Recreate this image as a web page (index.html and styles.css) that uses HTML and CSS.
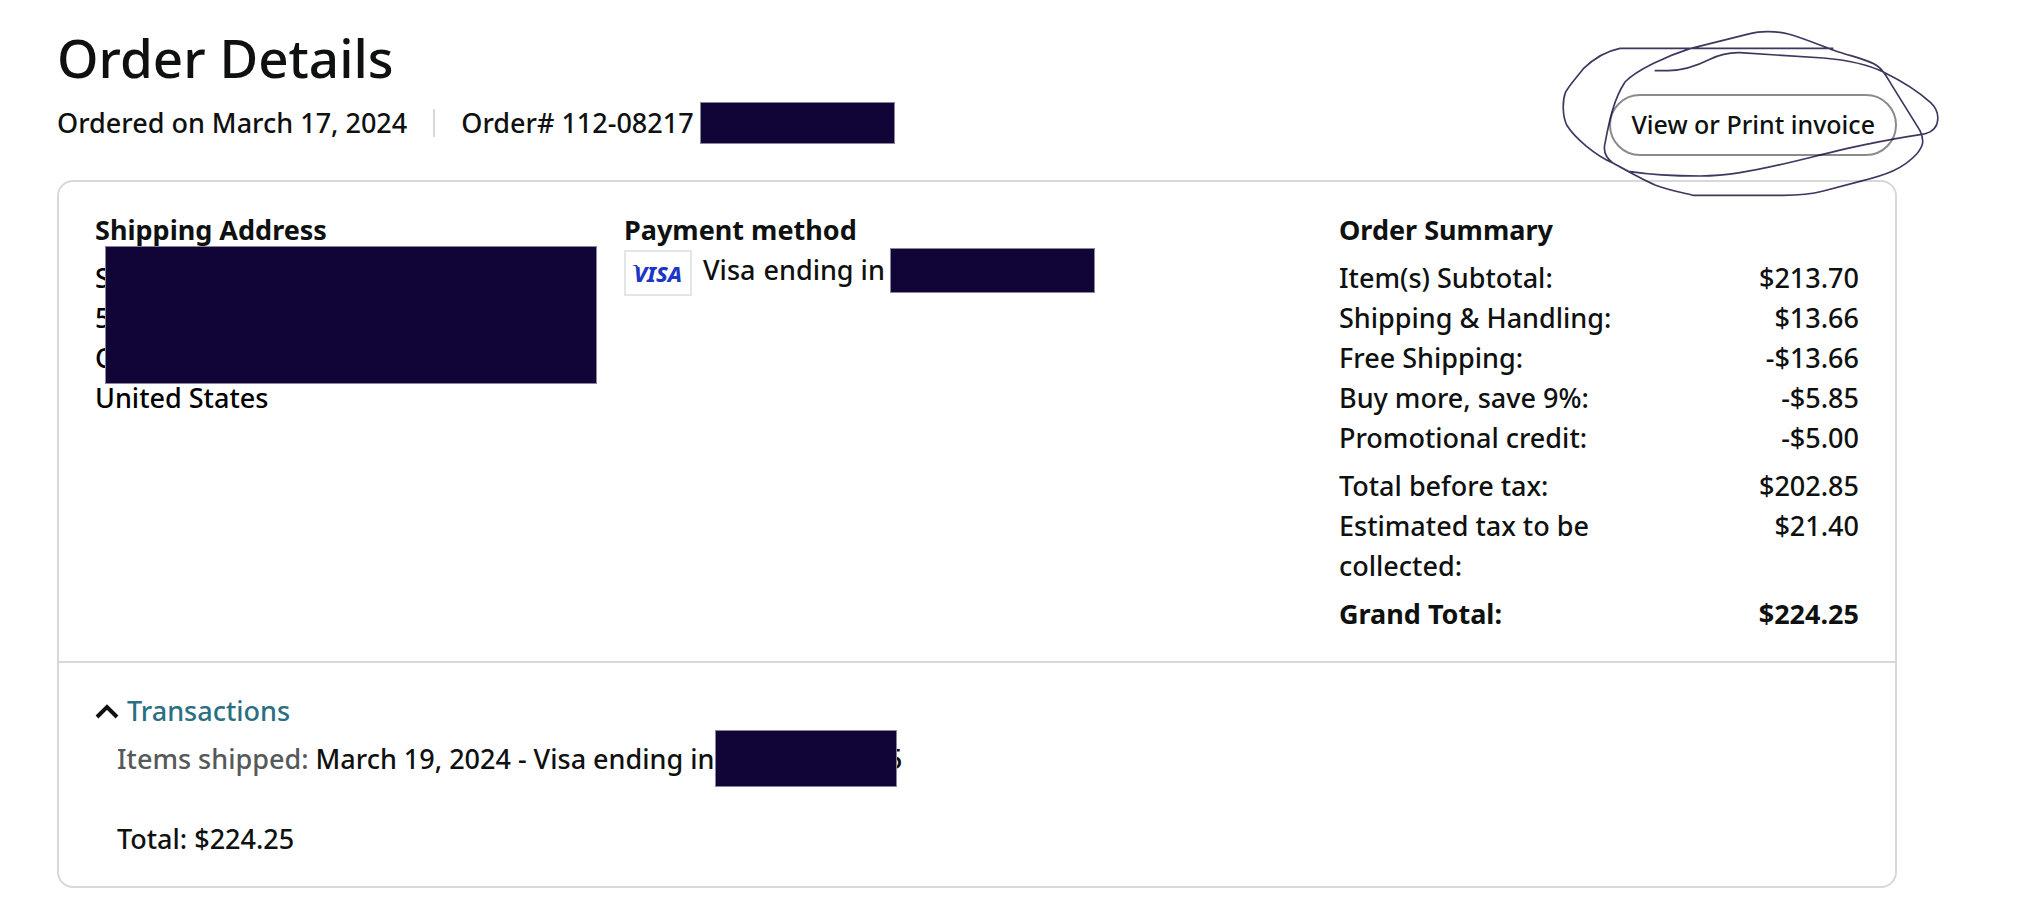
FILE: index.html
```html
<!DOCTYPE html>
<html lang="en">
<head>
    <meta charset="UTF-8">
    <title>Order Details</title>
    <link rel="stylesheet" href="styles.css">
</head>

<body>
<div class="page">
    <h1>Order Details</h1>
    <div class="order-bar">
        <div class="order-info">
            <span class="order-date">Ordered on March 17, 2024</span>
            <span class="order-number">Order# 112-08217</span>
            <span class="redacted redacted-number"></span>
        </div>
        <div class="invoice">
            <button type="button" class="invoice-button">View or Print invoice</button>
            <svg class="scribble" viewBox="0 0 1260 570">
                <path d="M344 152 H385 C430 152 470 138 510 118 C540 103 565 97 600 98 L850 114 C920 120 985 134 1030 156 C1085 183 1135 214 1172 248 C1195 270 1198 290 1190 314 C1182 334 1160 342 1145 343 C1100 350 1050 358 990 371 C860 396 730 438 600 458 C550 466 520 468 480 468 C400 468 330 464 265 454 L220 430 C195 412 190 390 195 370 C208 300 222 236 255 186 C290 150 380 108 450 86 L630 41 C660 32 710 33 745 42 C795 56 840 76 885 92 C930 108 990 120 1012 138 C1030 150 1040 170 1052 190 L1140 332 C1155 364 1148 380 1130 402 C1090 446 1040 464 960 484 L850 513 C800 526 760 526 730 526 H460 C430 518 390 512 345 495 C310 480 270 458 220 430 C165 405 105 355 80 315 C66 285 68 240 76 218 C86 198 105 178 130 146 C165 112 205 92 240 85 H880"/>
            </svg>
        </div>
    </div>

    <div class="card">
        <div class="details">
            <div class="shipping">
                <h2>Shipping Address</h2>
                <div class="address">
                    S<br>
                    5<br>
                    C<br>
                    United States
                    <span class="redacted redacted-address"></span>
                </div>
            </div>
            <div class="payment">
                <h2>Payment method</h2>
                <div class="payment-row">
                    <span class="visa">
                        <svg class="visa-wing" viewBox="0 0 8 6"><path d="M0 0H5L8 6C6 3 4 1 0 0Z"/></svg>
                        VISA
                    </span>
                    <span class="payment-name">Visa</span>
                    <span>ending in</span>
                    <span class="redacted redacted-card"></span>
                </div>
            </div>
            <div class="summary">
                <h2>Order Summary</h2>
                <table>
                    <tr><th>Item(s) Subtotal:</th><td>$213.70</td></tr>
                    <tr><th>Shipping &amp; Handling:</th><td>$13.66</td></tr>
                    <tr><th>Free Shipping:</th><td>-$13.66</td></tr>
                    <tr><th>Buy more, save 9%:</th><td>-$5.85</td></tr>
                    <tr><th>Promotional credit:</th><td>-$5.00</td></tr>
                    <tr class="spaced"><th>Total before tax:</th><td>$202.85</td></tr>
                    <tr><th>Estimated tax to be collected:</th><td>$21.40</td></tr>
                    <tr class="spaced grand-total"><th>Grand Total:</th><td>$224.25</td></tr>
                </table>
            </div>
        </div>

        <div class="transactions">
            <a href="#transactions" class="toggle">
                <svg class="chevron" viewBox="0 0 24 16"><path d="M2 14L12 4L22 14"/></svg>
                Transactions
            </a>
            <div class="transaction-list" id="transactions">
                <div class="transaction">
                    <div><span class="muted">Items shipped:</span> March 19, 2024 - Visa ending in</div>
                    <span class="card-end">5<span class="redacted redacted-end"></span></span>
                </div>
                <div>Total: $224.25</div>
            </div>
        </div>
    </div>
</div>
</body>
</html>
```

FILE: styles.css
```css
body {
    margin: 0;
    background-color: white;
    color: #0f1111;
    font-family: "Noto Sans", "Open Sans", sans-serif;
    font-size: 27px;
    font-weight: 500;
    line-height: 40px;
}

.page {
    padding: 22px 125px 12px 57px;
}

h1 {
    margin: 0;
    font-size: 53px;
    font-weight: 500;
    line-height: 72px;
}

h2 {
    margin: 0;
    font-size: 27px;
    font-weight: 700;
    line-height: 40px;
}

/* Dark blocks over private data */
.redacted {
    background-color: #110436;
    outline: 1px solid #8a849c;
    outline-offset: -1px;
}

/* Order bar */
.order-bar {
    display: flex;
    justify-content: space-between;
    align-items: flex-start;
    margin-bottom: 24px;
}

.order-info {
    display: flex;
    align-items: center;
    padding-top: 8px;
    white-space: nowrap;
}

.order-date {
    padding-right: 26px;
}

.order-number {
    display: flex;
    align-items: center;
}

.order-number::before {
    content: "";
    width: 2px;
    height: 28px;
    margin-right: 26px;
    background-color: #d5d9d9;
}

.redacted-number {
    width: 195px;
    height: 42px;
    margin-left: 6px;
}

.invoice {
    position: relative;
}

.invoice-button {
    display: block;
    height: 62px;
    padding: 0 20px 2px;
    border: 2px solid #888c8c;
    border-radius: 31px;
    background-color: white;
    color: #0f1111;
    font-family: inherit;
    font-size: 25px;
    font-weight: 500;
    line-height: 56px;
    cursor: pointer;
}

.invoice-button:hover {
    background-color: #f7fafa;
}

.scribble {
    position: absolute;
    top: -74px;
    right: -63px;
    width: 420px;
    height: 190px;
    fill: none;
    stroke: #110436;
    stroke-width: 5;
    stroke-opacity: 0.8;
    pointer-events: none;
}

/* Card */
.card {
    border: 2px solid #d5d9d9;
    border-radius: 16px;
}

.details {
    display: grid;
    grid-template-columns: 529fr 715fr 520fr;
    padding: 28px 36px 27px;
    border-bottom: 2px solid #d5d9d9;
}

.address {
    position: relative;
    margin-top: 8px;
    color: black;
}

.redacted-address {
    position: absolute;
    top: -12px;
    left: 10px;
    width: 492px;
    height: 138px;
}

.payment-row {
    display: flex;
    align-items: flex-start;
}

.visa {
    position: relative;
    box-sizing: border-box;
    width: 68px;
    height: 46px;
    margin-right: 11px;
    border: 2px solid #e3e6e6;
    color: #1d36c8;
    font-size: 22px;
    font-style: italic;
    font-weight: 800;
    line-height: 42px;
    text-align: center;
}

.visa-wing {
    position: absolute;
    top: 13px;
    left: 6px;
    width: 8px;
    height: 6px;
    fill: #1d36c8;
}

.payment-name {
    margin-right: 8px;
}

.redacted-card {
    width: 205px;
    height: 45px;
    margin: -2px 0 0 5px;
}

table {
    width: 100%;
    margin-top: 8px;
    border-collapse: collapse;
}

th, td {
    padding: 0;
    font-weight: 500;
    text-align: left;
    vertical-align: top;
}

th {
    width: 300px;
}

td {
    text-align: right;
}

.spaced th, .spaced td {
    padding-top: 8px;
}

.grand-total th, .grand-total td {
    font-weight: 700;
}

/* Transactions */
.transactions {
    padding: 28px 36px 27px;
}

.toggle {
    display: flex;
    align-items: center;
    gap: 8px;
    width: fit-content;
    color: #2b6f84;
    text-decoration: none;
}

.toggle:hover {
    text-decoration: underline;
}

.chevron {
    width: 24px;
    height: 16px;
    fill: none;
    stroke: #0f1111;
    stroke-width: 4;
}

.transaction-list {
    padding: 8px 0 0 22px;
}

.transaction {
    display: flex;
    margin-bottom: 40px;
}

.muted {
    color: #565959;
}

.card-end {
    position: relative;
    width: 188px;
    text-align: right;
}

.redacted-end {
    position: absolute;
    top: -9px;
    right: 5px;
    width: 182px;
    height: 57px;
}
```
